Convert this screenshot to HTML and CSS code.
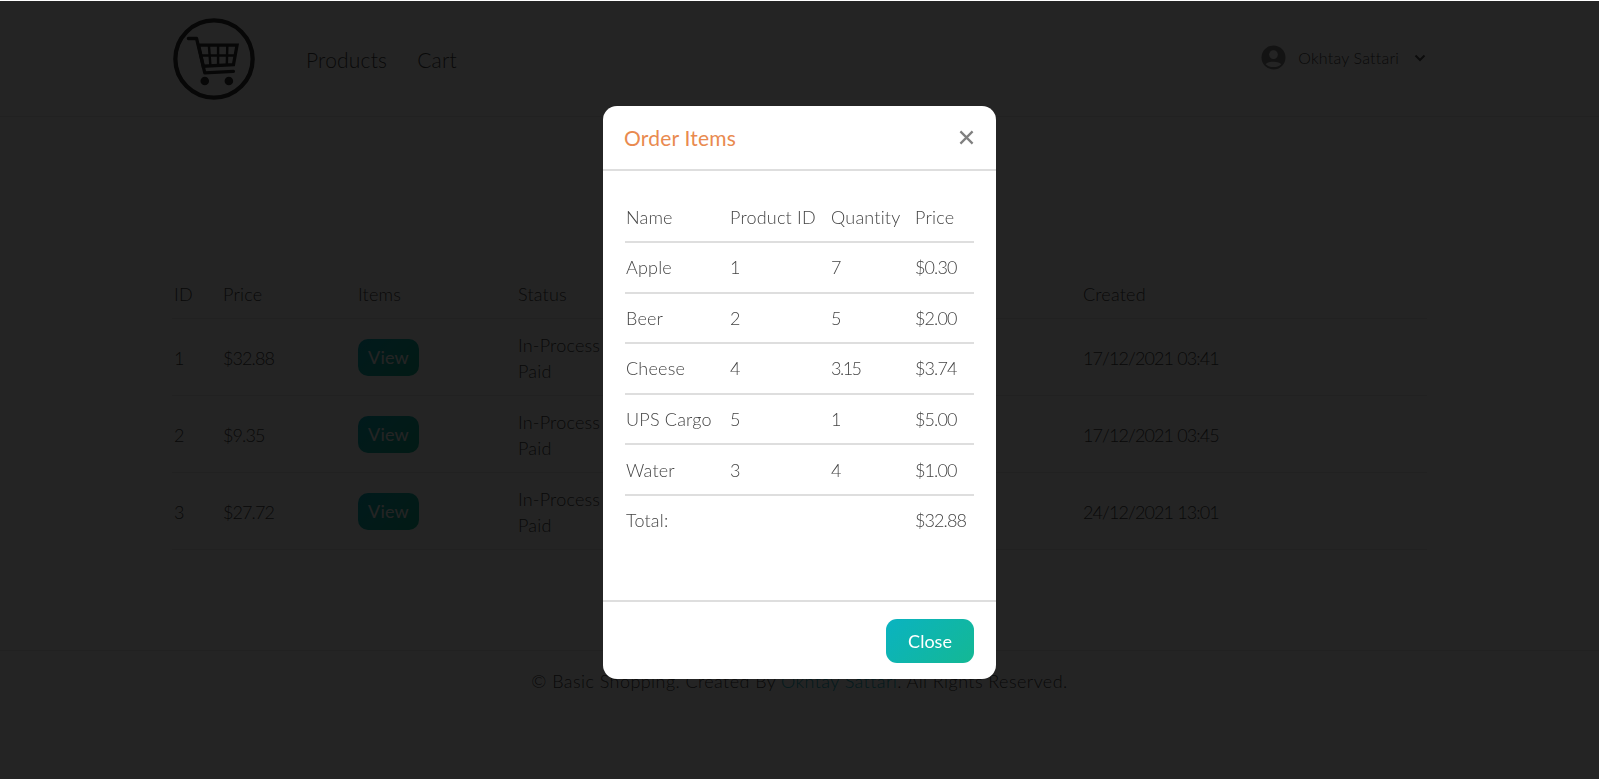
FILE: index.html
```html
<!DOCTYPE html>
<html lang="en">
<head>
    <meta charset="UTF-8">
    <title>Basic Shopping</title>
    <link rel="stylesheet" href="styles.css">
</head>
<body>
    <header class="site-header">
        <div class="container header-row">
            <svg class="logo" viewBox="0 0 80 80" aria-hidden="true">
                <circle cx="40" cy="40" r="37.700" fill="none" stroke="#333" stroke-width="4.200"/>
                <path d="M15 20h8l8 33.500 28-1.500" fill="none" stroke="#333" stroke-width="3.200" stroke-linecap="round" stroke-linejoin="round"/>
                <path d="M25 26.500h37.500L59 45.500 29.500 47z" fill="none" stroke="#333" stroke-width="3.200"/>
                <path d="M26 36.500h35M35 26.500l1.500 20M44 26.500v19.500M53 26.500l-.5 19" stroke="#333" stroke-width="2.400"/>
                <circle cx="31" cy="61.500" r="4.200" fill="#333"/>
                <circle cx="54.500" cy="61.500" r="4.200" fill="#333"/>
            </svg>
            <nav class="main-nav">
                <a href="#">Products</a>
                <a href="#">Cart</a>
            </nav>
            <div class="user-menu">
                <svg class="user-icon" viewBox="0 0 26 26" aria-hidden="true">
                    <circle cx="13" cy="13" r="12.500" fill="#888"/>
                    <circle cx="13" cy="10" r="4.500" fill="#fff"/>
                    <path d="M5 20c2-3.500 14-3.500 16 0-4 4-12 4-16 0z" fill="#fff"/>
                </svg>
                <span class="user-name">Okhtay Sattari</span>
                <svg class="chevron" viewBox="0 0 12 8" aria-hidden="true">
                    <path d="M1.500 1.500 6 6l4.500-4.500" fill="none" stroke="#555" stroke-width="2"/>
                </svg>
            </div>
        </div>
    </header>

    <main class="container orders">
        <table class="orders-table">
            <thead>
                <tr><th class="col-id">ID</th><th class="col-price">Price</th><th class="col-items">Items</th><th class="col-status">Status</th><th class="col-gap"></th><th>Created</th></tr>
            </thead>
            <tbody>
                <tr><td>1</td><td class="num">$32.88</td><td><span class="view-btn">View</span></td><td>In-Process<br>Paid</td><td></td><td class="date">17/12/2021 03:41</td></tr>
                <tr><td>2</td><td class="num">$9.35</td><td><span class="view-btn">View</span></td><td>In-Process<br>Paid</td><td></td><td class="date">17/12/2021 03:45</td></tr>
                <tr><td>3</td><td class="num">$27.72</td><td><span class="view-btn">View</span></td><td>In-Process<br>Paid</td><td></td><td class="date">24/12/2021 13:01</td></tr>
            </tbody>
        </table>
    </main>

    <footer class="site-footer">
        <p>© Basic Shopping. Created By <a href="#">Okhtay Sattari</a>. All Rights Reserved.</p>
    </footer>

    <div class="backdrop">
        <div class="modal">
            <div class="modal-head">
                <h2>Order Items</h2>
                <svg class="modal-x" viewBox="0 0 16 16" aria-hidden="true">
                    <path d="M1.500 1.500l13 13M14.500 1.500l-13 13" stroke="#808080" stroke-width="2.400"/>
                </svg>
            </div>
            <div class="modal-body">
                <table class="items-table">
                    <thead>
                        <tr><th class="c-name">Name</th><th class="c-pid">Product ID</th><th class="c-qty">Quantity</th><th>Price</th></tr>
                    </thead>
                    <tbody>
                        <tr><td>Apple</td><td>1</td><td>7</td><td class="num">$0.30</td></tr>
                        <tr><td>Beer</td><td>2</td><td>5</td><td class="num">$2.00</td></tr>
                        <tr><td>Cheese</td><td>4</td><td class="qty-dec">3.15</td><td class="num">$3.74</td></tr>
                        <tr><td>UPS Cargo</td><td>5</td><td>1</td><td class="num">$5.00</td></tr>
                        <tr><td>Water</td><td>3</td><td>4</td><td class="num">$1.00</td></tr>
                        <tr class="total-row"><td>Total:</td><td></td><td></td><td class="num">$32.88</td></tr>
                    </tbody>
                </table>
            </div>
            <div class="modal-foot">
                <button class="close-btn">Close</button>
            </div>
        </div>
    </div>
</body>
</html>
```

FILE: styles.css
```css
* {
    box-sizing: border-box;
}

html, body {
    height: 100%;
}

body {
    margin: 0;
    font-family: "Lato", "Open Sans", sans-serif;
    font-size: 18px;
    font-weight: 300;
    letter-spacing: .2px;
    color: #444;
    background: #fff;
    overflow: hidden;
}

a {
    color: inherit;
    text-decoration: none;
}

.container {
    width: 1255px;
    margin: 0 auto;
}

.site-header {
    height: 117px;
    border-bottom: 1px solid #e8e8e8;
}

.header-row {
    display: flex;
    align-items: center;
    height: 100%;
    padding: 2px 1px 0 1px;
}

.logo {
    width: 82px;
    height: 82px;
}

.main-nav {
    display: flex;
    gap: 30px;
    margin-left: 51px;
    font-size: 21px;
}

.user-menu {
    display: flex;
    align-items: center;
    margin-left: auto;
    margin-top: -3px;
    font-size: 16px;
}

.user-icon {
    width: 25px;
    height: 25px;
}

.user-name {
    margin-left: 12px;
}

.chevron {
    width: 12px;
    height: 8px;
    margin-left: 15px;
}

.orders {
    padding-top: 153px;
}

.orders-table {
    width: 100%;
    border-collapse: collapse;
    table-layout: fixed;
}

.orders-table th {
    height: 48px;
    padding: 0 2px;
    font-weight: 300;
    text-align: left;
    border-bottom: 1px solid #e8e8e8;
}

.orders-table td {
    height: 77px;
    padding: 2px 2px 0;
    line-height: 26px;
    border-bottom: 1px solid #e8e8e8;
}

.col-id { width: 49px; }
.col-price { width: 135px; }
.col-items { width: 160px; }
.col-status { width: 201px; }
.col-gap { width: 364px; }

.num {
    letter-spacing: -.9px;
}

.date {
    letter-spacing: -.9px;
}

.qty-dec {
    letter-spacing: -1.500px;
}

.view-btn {
    display: inline-block;
    width: 61px;
    line-height: 37px;
    vertical-align: middle;
    text-align: center;
    border-radius: 10px;
    font-weight: 400;
    letter-spacing: .2px;
    color: #fff;
    background: linear-gradient(135deg, #0ab3c1, #14b894);
}

.site-footer {
    margin-top: 100px;
    padding-top: 19px;
    border-top: 1px solid #e8e8e8;
    text-align: center;
    letter-spacing: .43px;
}

.site-footer p {
    margin: 0;
}

.site-footer a {
    color: #0ab3c1;
}

.backdrop {
    position: fixed;
    inset: 1px 0 0 0;
    display: flex;
    justify-content: center;
    align-items: flex-start;
    background: rgba(0, 0, 0, .86);
}

.modal {
    width: 393px;
    height: 573px;
    margin-top: 105px;
    background: #fff;
    border-radius: 14px;
    display: flex;
    flex-direction: column;
}

.modal-head {
    display: flex;
    align-items: center;
    justify-content: space-between;
    height: 65px;
    padding: 0 22px 0 21px;
    border-bottom: 2px solid #dedede;
}

.modal-head h2 {
    margin: 0;
    font-size: 21px;
    font-weight: 400;
    color: #e98a4f;
}

.modal-x {
    width: 15px;
    height: 15px;
}

.modal-body {
    flex: 1;
    padding: 21px 22px 0;
}

.items-table {
    width: 100%;
    border-collapse: collapse;
    table-layout: fixed;
}

.items-table th,
.items-table td {
    padding: 0 1px;
    font-weight: 300;
    text-align: left;
    height: 50.600px;
    border-bottom: 2px solid #dedede;
}

.items-table th {
    height: 50px;
}

.total-row td {
    border-bottom: 0;
    height: 50px;
}

.c-name { width: 104px; }
.c-pid { width: 101px; }
.c-qty { width: 84px; }

.modal-foot {
    display: flex;
    justify-content: flex-end;
    align-items: center;
    height: 79px;
    padding: 0 22px;
    border-top: 2px solid #dedede;
}

.close-btn {
    width: 88px;
    height: 44px;
    border: 0;
    border-radius: 11px;
    font: inherit;
    font-weight: 400;
    color: #fff;
    background: linear-gradient(135deg, #0ab3c1, #14b894);
}
```
